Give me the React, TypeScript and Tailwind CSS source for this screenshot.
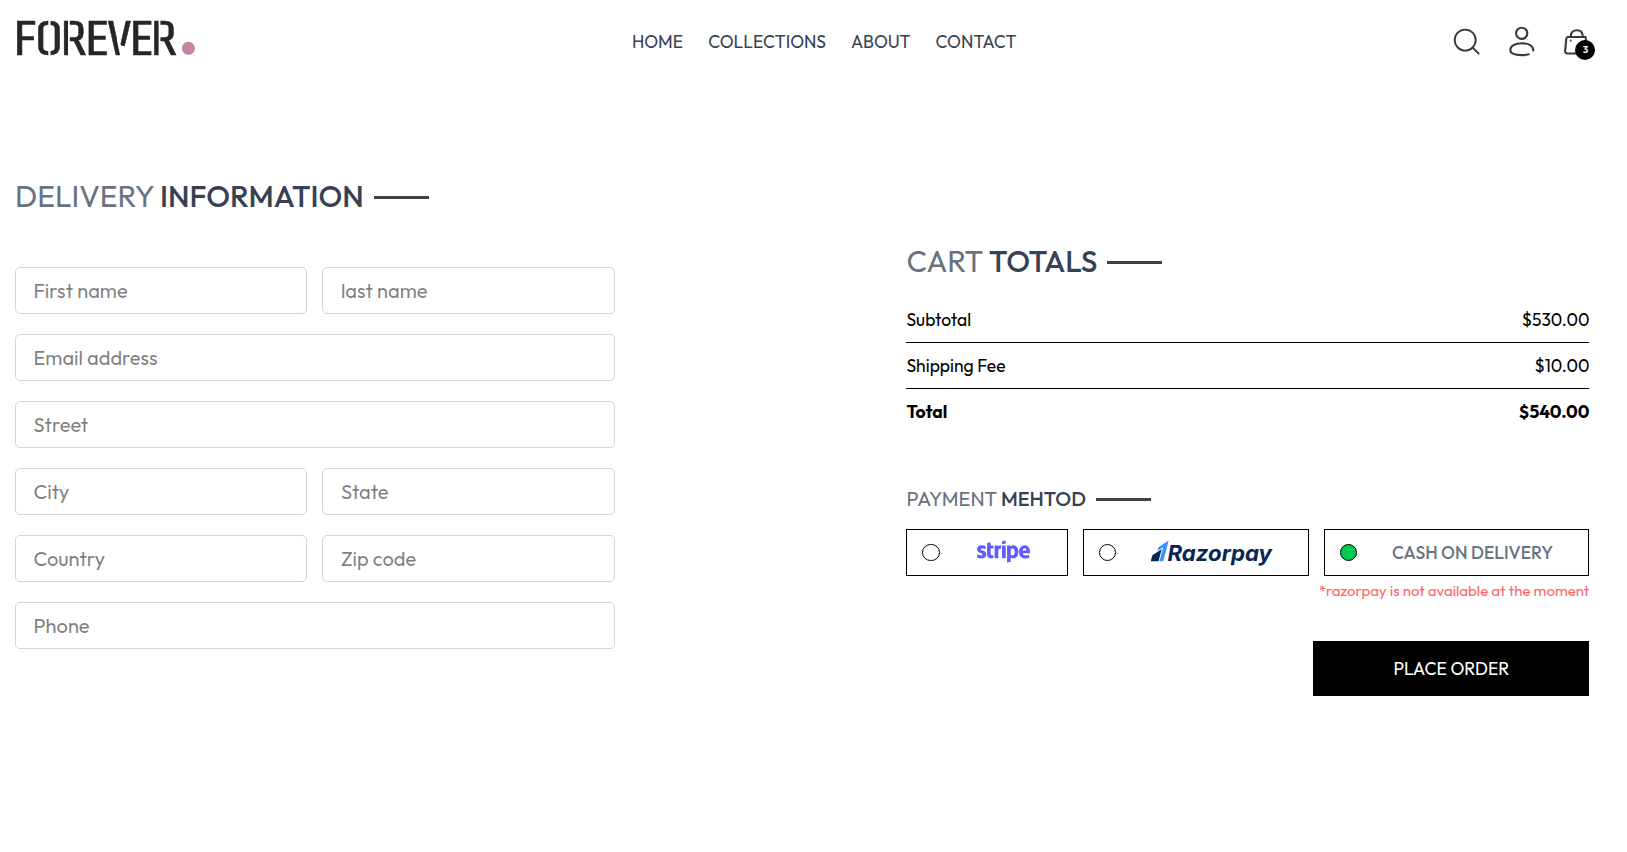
import { FaStripe } from "react-icons/fa";

const navLinks = ["Home", "Collections", "About", "Contact"];

function Logo() {
  return (
    <svg width="181" height="45" viewBox="15 19 181 45" role="img" aria-label="Forever">
      <text
        transform="scale(1.1 1)"
        x="10.7 31.6 55 75.95 95.6 116.45 137.1"
        y="54.8"
        fill="#262626"
        stroke="#262626"
        strokeWidth=".5"
        fontFamily="'Share Tech Mono', 'Roboto Condensed', Roboto, sans-serif"
        fontSize="48"
      >
        FOREVER
      </text>
      <g fill="#fff">
        <rect x="48.3" y="19" width="2.2" height="38" />
        <rect x="68" y="19" width="1.8" height="38" />
        <rect x="158.6" y="19" width="1.8" height="38" />
        <path d="M116.900 40L118.700 39L120.900 45.500L125.900 46.500L124 57H120.400z" />
      </g>
      <circle cx="188.4" cy="48.3" r="6.5" fill="#c586a5" />
    </svg>
  );
}

function Title({ first, second, small }: { first: string; second: string; small?: boolean }) {
  return (
    <div className="flex items-center gap-2.5">
      <p className={small ? "text-[20px] leading-[30px] text-gray-500" : "text-[30px] leading-[40px] text-gray-500"}>
        {first} <span className="font-medium text-gray-700">{second}</span>
      </p>
      <span className={small ? "mt-px h-[3px] w-[55px] bg-[#414141]" : "mt-[3px] h-[3px] w-[55px] bg-[#414141]"} />
    </div>
  );
}

function Field({ placeholder }: { placeholder: string }) {
  return (
    <input
      placeholder={placeholder}
      className="h-[47px] w-full min-w-0 rounded-[5px] border border-gray-300 px-[17.5px] text-[20px] leading-[30px] outline-none"
    />
  );
}

function FieldPair({ left, right }: { left: string; right: string }) {
  return (
    <div className="grid grid-cols-[292.4px_292.6px] gap-[15px]">
      <Field placeholder={left} />
      <Field placeholder={right} />
    </div>
  );
}

function Radio({ on }: { on?: boolean }) {
  return (
    <span
      className={
        on
          ? "size-[17.5px] shrink-0 rounded-full border border-black bg-[#00c950]"
          : "size-[17.5px] shrink-0 rounded-full border border-black"
      }
    />
  );
}

function Row({ label, value }: { label: string; value: string }) {
  return (
    <div className="flex justify-between">
      <span>{label}</span>
      <span>{value}</span>
    </div>
  );
}

export default function App() {
  return (
    <div className="min-h-screen bg-white pr-[37.6px] pl-[15px] font-[Outfit,Lato,sans-serif] text-[17.5px] leading-[25px] text-black">
      <header className="flex h-[83px] items-center justify-between">
        <Logo />
        <nav className="-ml-px flex gap-[25px] text-gray-700 uppercase">
          {navLinks.map((l) => (
            <a key={l}>{l}</a>
          ))}
        </nav>
        <div className="flex items-center gap-[28px]">
          <svg width="27" height="33" viewBox="0 0 27 33" fill="none" stroke="#3a3a3a" strokeWidth="1.9">
            <circle cx="12.2" cy="15.1" r="10.5" />
            <path d="M19.6 22.6l6 5.9" strokeLinecap="round" />
          </svg>
          <svg width="27" height="33" viewBox="0 0 27 33" fill="none" stroke="#3a3a3a" strokeWidth="2.1" strokeLinecap="round">
            <circle cx="13.7" cy="8.3" r="5.6" />
            <path d="M25.2 25.4C25.6 21 20.500 18.200 13.700 18.200S2.300 21 2.300 25c0 3.400 3.500 5.100 11.400 5.100 3.200 0 5-.2 7-.8" />
          </svg>
          <div className="relative flex">
            <svg width="26" height="33" viewBox="0 0 26 33" fill="none" stroke="#3a3a3a" strokeWidth="2.1">
              <path d="M5.200 12h17.400l1.800 16.500H4.700c-1.800 0-2.800-1-2.600-2.700L3.300 13.800c.1-1.100.8-1.800 1.900-1.800z" strokeLinejoin="round" />
              <path d="M7.800 11.500C7.800 7.500 9.900 5.200 13.800 5.200s6 2.300 6 6.300" />
              <circle cx="7.700" cy="15.700" r=".7" strokeWidth="1" />
            </svg>
            <span className="absolute top-[15px] left-[12px] flex size-5 items-center justify-center rounded-full bg-black text-[10px] leading-[10px] font-semibold text-white">
              3
            </span>
          </div>
        </div>
      </header>

      <main className="flex justify-between pt-[93px]">
        <section className="w-[600px]">
          <Title first="DELIVERY" second="INFORMATION" />
          <div className="mt-[51px] flex flex-col gap-5">
            <FieldPair left="First name" right="last name" />
            <Field placeholder="Email address" />
            <Field placeholder="Street" />
            <FieldPair left="City" right="State" />
            <FieldPair left="Country" right="Zip code" />
            <Field placeholder="Phone" />
          </div>
        </section>

        <section className="w-[683px] pt-[65px]">
          <Title first="CART" second="TOTALS" />
          <div className="mt-[26px] flex flex-col gap-2.5">
            <Row label="Subtotal" value="$530.00" />
            <hr className="border-black" />
            <Row label="Shipping Fee" value="$10.00" />
            <hr className="border-black" />
            <div className="font-bold">
              <Row label="Total" value="$540.00" />
            </div>
          </div>

          <div className="mt-[60px]">
            <Title first="PAYMENT" second="MEHTOD" small />
          </div>
          <div className="mt-[15px] flex justify-between">
            <div className="flex h-[47px] w-[162px] items-center border border-black px-[15px]">
              <Radio />
              <FaStripe className="mb-[2px] ml-[37px] h-[43px] w-[53px] text-[#635bff]" />
            </div>
            <div className="flex h-[47px] w-[226px] items-center border border-black px-[14.5px]">
              <Radio />
              <svg className="ml-[34.5px]" width="124" height="30" viewBox="1151 537 124 30" role="img" aria-label="Razorpay">
                <g transform="translate(1149.400 539.600) scale(.86)">
                  <path fill="#3395ff" d="M22.436 0l-11.910 7.773-1.174 4.276 6.625-4.297L11.650 24h4.391z" />
                  <path fill="#072654" d="M14.260 10.098L3.389 17.166 1.564 24h9.008z" />
                </g>
                <text
                  x="1167.5"
                  y="560"
                  fontFamily="Inter, sans-serif"
                  fontWeight="700"
                  fontStyle="italic"
                  fontSize="21.5"
                  fill="#072654"
                  textLength="104.5"
                  lengthAdjust="spacingAndGlyphs"
                >
                  Razorpay
                </text>
              </svg>
            </div>
            <div className="flex h-[47px] w-[265px] items-center border border-black px-[14.5px]">
              <Radio on />
              <span className="ml-[34.5px] font-medium whitespace-nowrap text-gray-500">CASH ON DELIVERY</span>
            </div>
          </div>
          <p className="mt-[5px] text-right text-[15px] leading-5 text-red-400">*razorpay is not available at the moment</p>
          <div className="mt-[40px] flex justify-end">
            <button className="h-[55px] w-[276px] bg-black text-white">PLACE ORDER</button>
          </div>
        </section>
      </main>
    </div>
  );
}
